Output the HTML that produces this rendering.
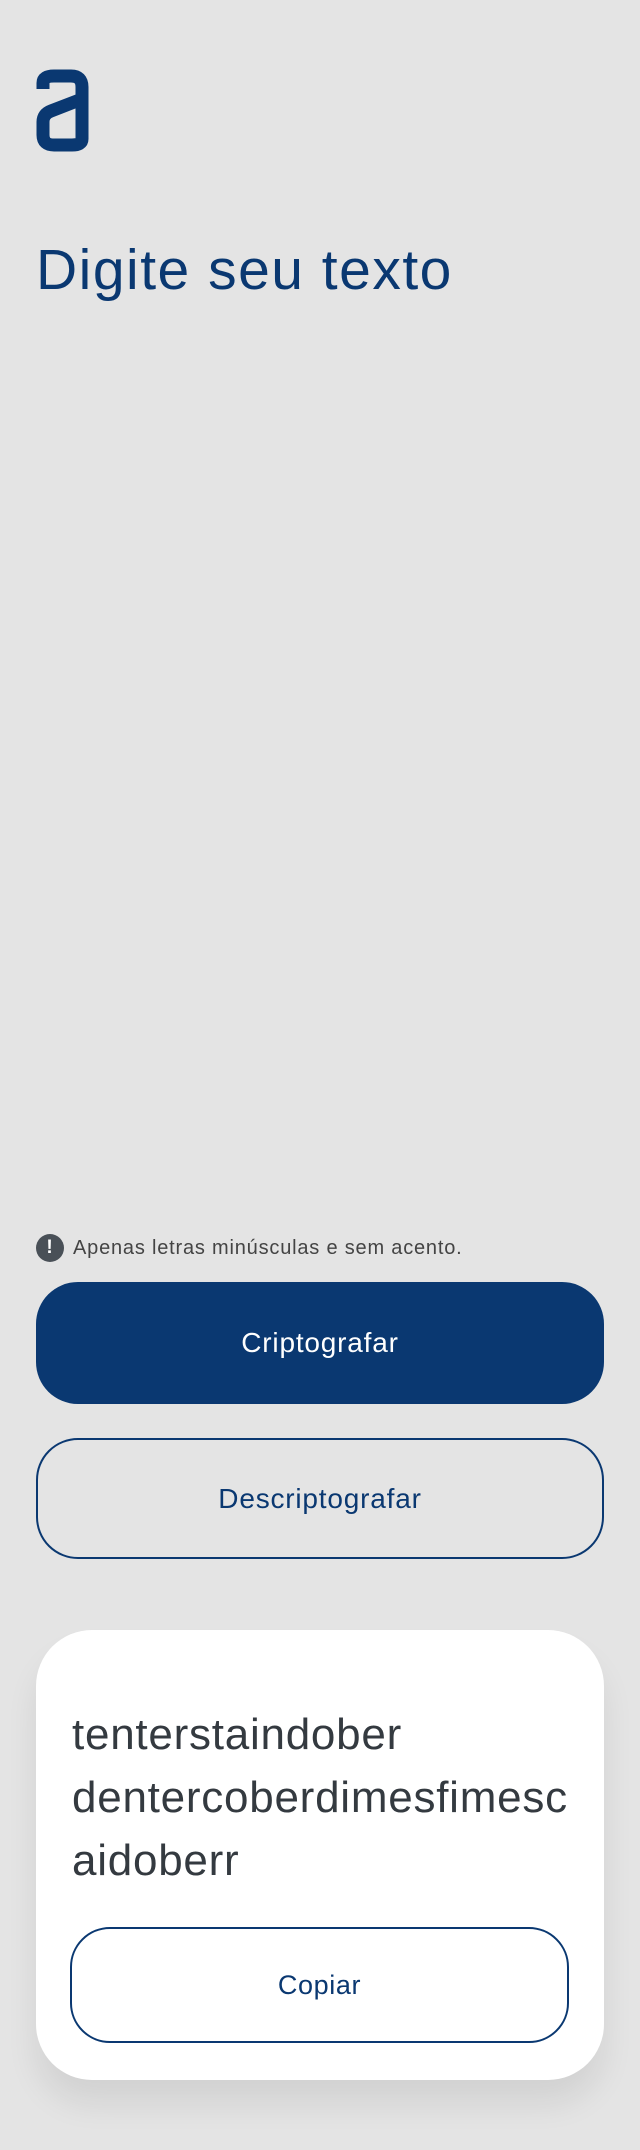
<!DOCTYPE html>
<html><head><meta charset="utf-8"><style>
*{margin:0;padding:0;box-sizing:border-box}
body{width:640px;height:2150px;background:#e4e4e4;font-family:"Liberation Sans",sans-serif;position:relative;overflow:hidden}
.abs{position:absolute}
h1{position:absolute;left:36px;top:235px;font-size:57px;font-weight:400;color:#0a3871;letter-spacing:1.5px;line-height:70px}
.hint{left:36px;top:1234px;display:flex;align-items:center;font-size:20px;color:#444;letter-spacing:0.8px}
.ic{width:28px;height:28px;border-radius:50%;background:#495057;color:#fff;font-weight:700;font-size:19px;display:flex;align-items:center;justify-content:center;margin-right:9px}
.btn{left:36px;width:568px;border-radius:42px;display:flex;align-items:center;justify-content:center;font-size:28px;letter-spacing:0.8px}
.b1{top:1282px;height:122px;background:#0a3871;color:#fff}
.b2{top:1438px;height:121px;border:2px solid #0a3871;color:#0a3871}
.card{left:36px;top:1630px;width:568px;height:450px;background:#fff;border-radius:56px;box-shadow:0 24px 32px rgba(0,0,0,.08)}
.out{font-size:44px;color:#343a40;line-height:63px;letter-spacing:0.75px}
.b3{left:34px;top:297px;width:499px;height:116px;border:2px solid #0a3871;border-radius:40px;display:flex;align-items:center;justify-content:center;color:#0a3871;font-size:27px;letter-spacing:0.6px}
</style></head><body>
<svg class="abs" style="left:36px;top:69px" width="54" height="83" viewBox="0 0 54 83">
<path d="M7 20 V14 Q7 7 18 7 H35 Q46 7 46 18 V70 Q46 76 36 76 H18 Q7 76 7 66 V53 Q7 45 15 42 L46 30" fill="none" stroke="#0a3871" stroke-width="13"/>
</svg>
<h1>Digite seu texto</h1>
<div class="abs hint"><div class="ic">!</div>Apenas letras minúsculas e sem acento.</div>
<div class="abs btn b1">Criptografar</div>
<div class="abs btn b2">Descriptografar</div>
<div class="abs card">
<div class="abs out" style="left:36px;top:73px">tenterstaindober<br>dentercoberdimesfimesc<br>aidoberr</div>
<div class="abs b3">Copiar</div>
</div>
</body></html>
